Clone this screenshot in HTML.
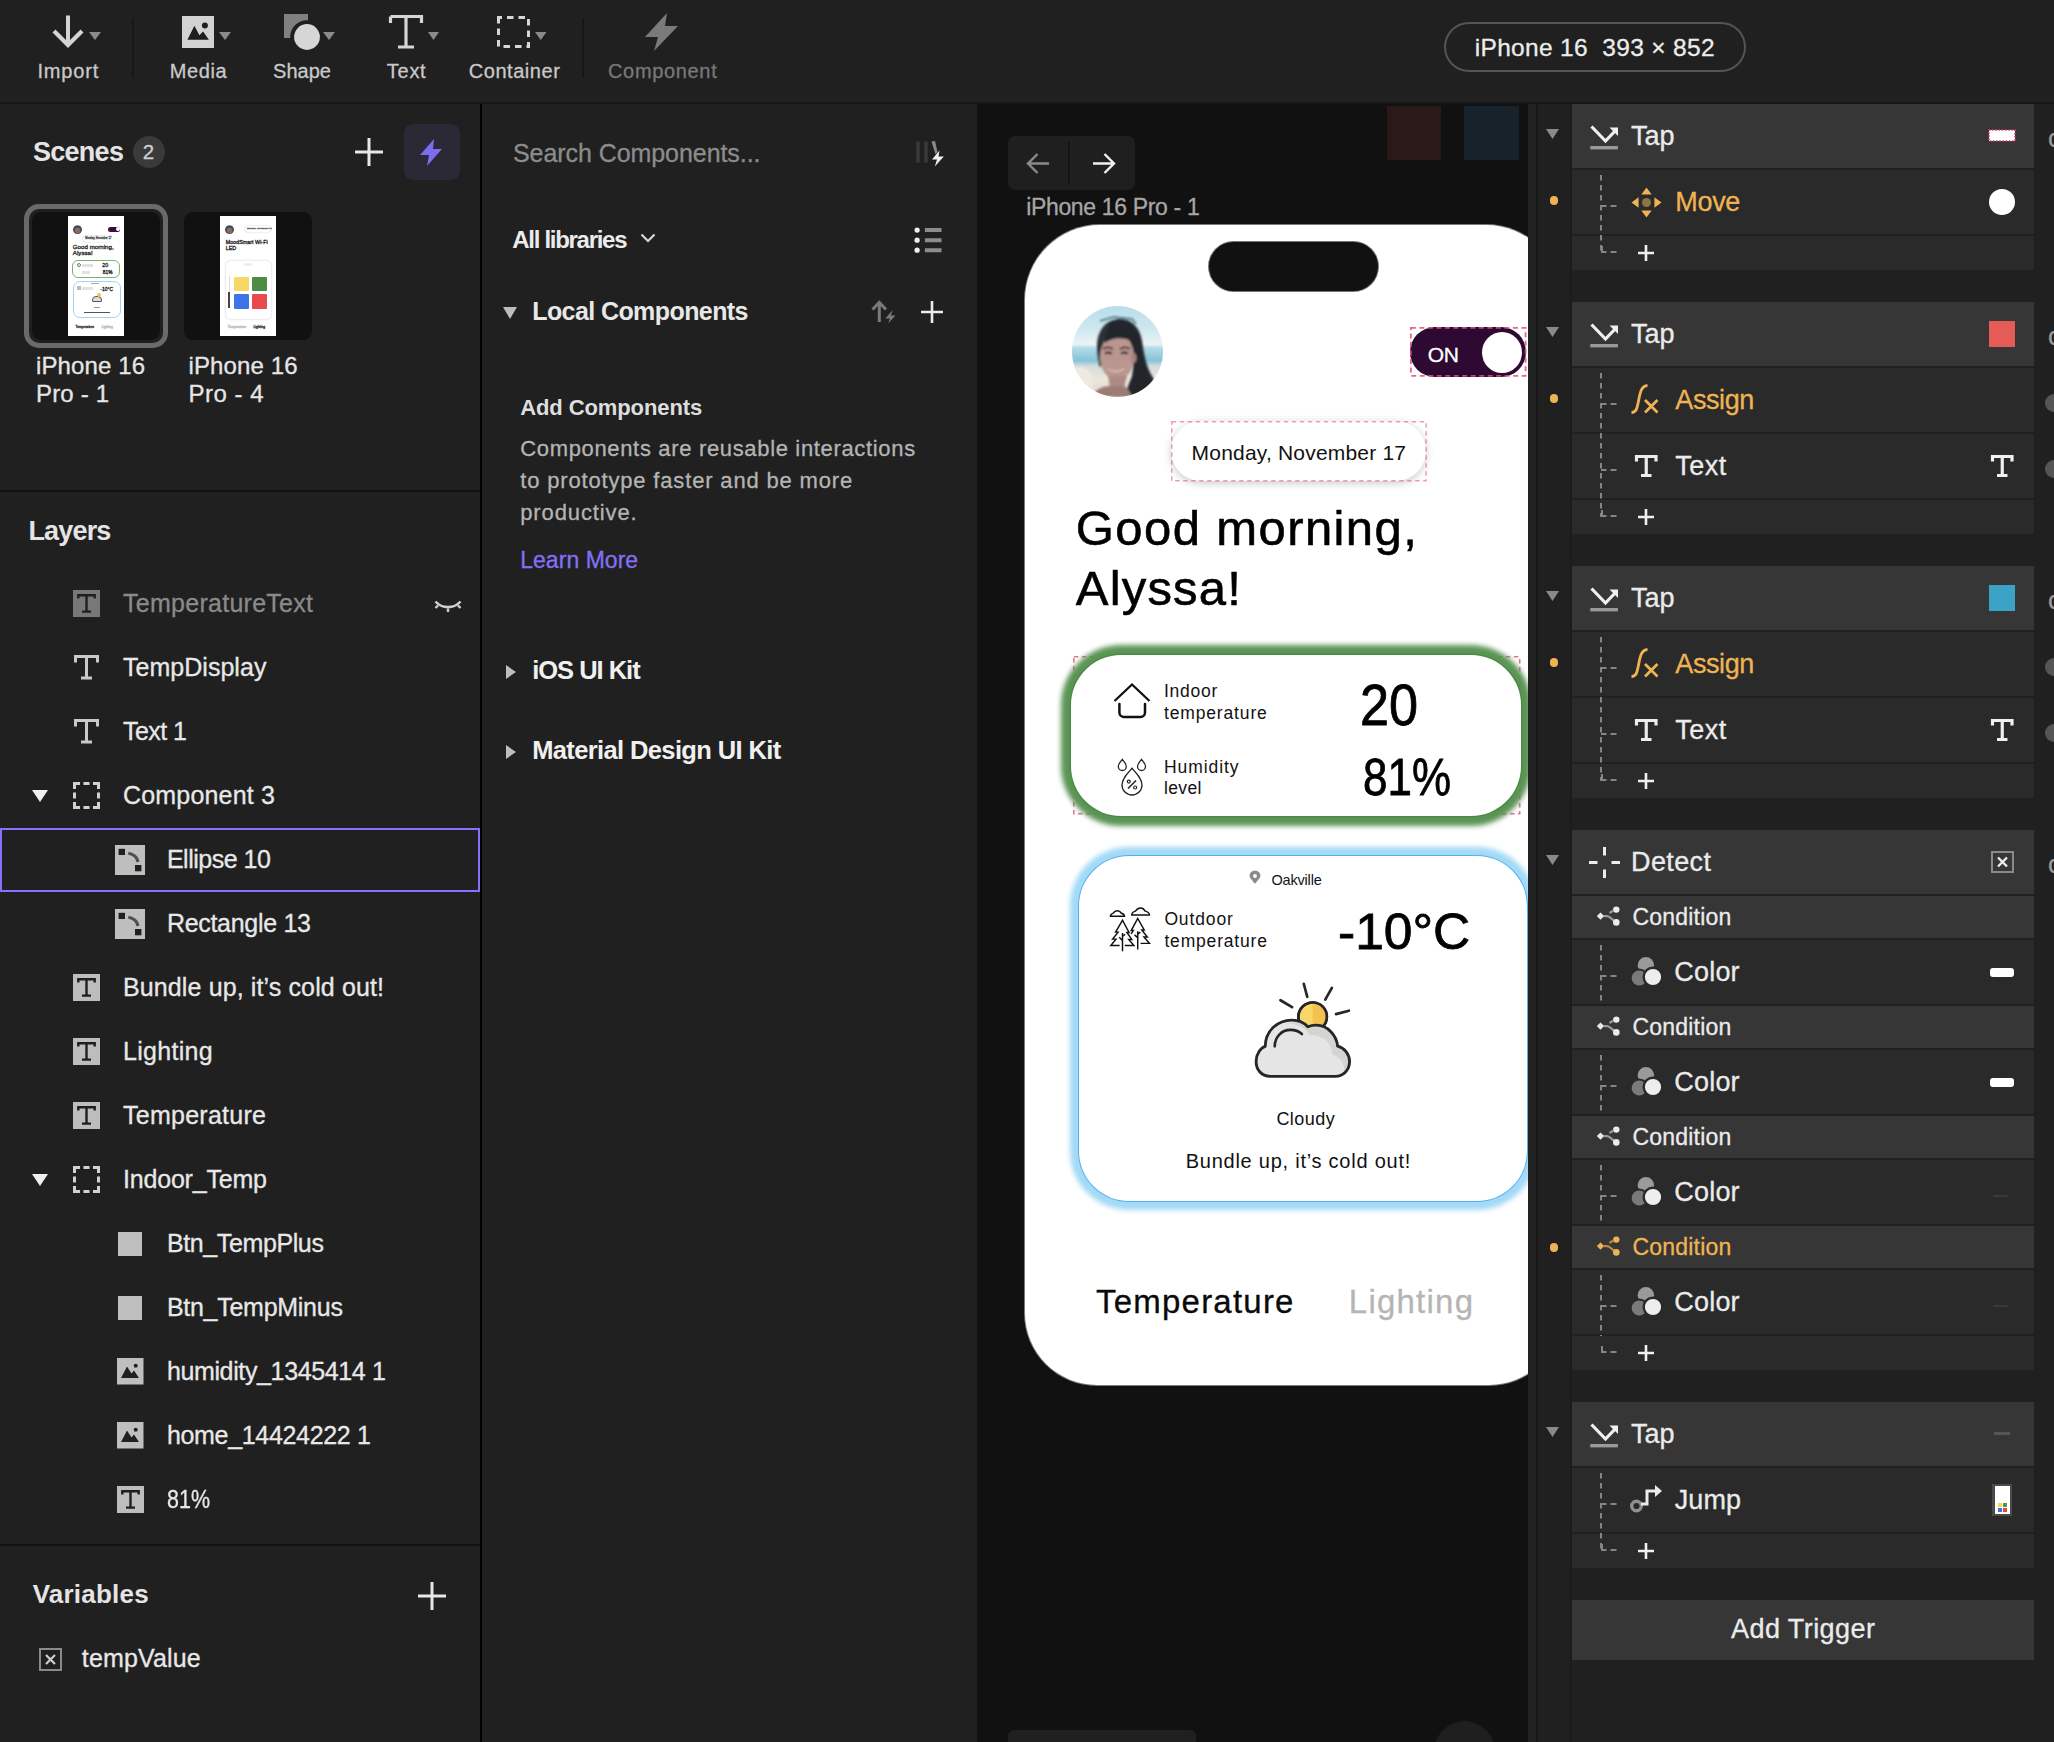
<!DOCTYPE html><html><head><meta charset="utf-8"><style>
html,body{margin:0;padding:0;width:2054px;height:1742px;overflow:hidden;background:#202020;}
body{position:relative;font-family:"Liberation Sans",sans-serif;}
.t{position:absolute;white-space:pre;-webkit-text-stroke-width:0.3px;}
.b{position:absolute;}
svg.b{overflow:visible;}
</style></head><body>
<div class="b" style="left:0px;top:0px;width:2054px;height:103px;background:#202020;"></div>
<div class="b" style="left:0px;top:102px;width:2054px;height:2px;background:#171717;"></div>
<div class="b" style="left:0px;top:104px;width:480px;height:1638px;background:#202020;"></div>
<div class="b" style="left:480px;top:104px;width:2px;height:1638px;background:#000;"></div>
<div class="b" style="left:0px;top:490px;width:480px;height:2px;background:#121212;"></div>
<div class="b" style="left:0px;top:1544px;width:480px;height:2px;background:#121212;"></div>
<div class="b" style="left:482px;top:104px;width:495px;height:1638px;background:#202020;"></div>
<div class="b" style="left:977px;top:104px;width:551px;height:1638px;background:#111111;"></div>
<div class="b" style="left:1528px;top:104px;width:8px;height:1638px;background:#222222;"></div>
<div class="b" style="left:1536px;top:104px;width:2px;height:1638px;background:#171717;"></div>
<div class="b" style="left:1538px;top:104px;width:516px;height:1638px;background:#202020;"></div>
<div class="b" style="left:1570px;top:104px;width:2px;height:1638px;background:#1b1b1b;"></div>
<svg class="b" style="left:52px;top:15px;" width="32" height="34" viewBox="0 0 32 34"><path d="M16 0.5V30" stroke="#d4d4d4" stroke-width="4" fill="none"/><path d="M2 16L16 30L30 16" stroke="#d4d4d4" stroke-width="4.2" fill="none"/></svg>
<svg class="b" style="left:89px;top:31.5px;" width="12" height="8" viewBox="0 0 12 8"><path d="M0 0H12L6.0 8Z" fill="#8a8a8a"/></svg>
<div class="t " style="left:37.40px;top:60.77px;font-size:20px;line-height:20px;color:#c9c9c9;letter-spacing:0.860px;">Import</div>
<div class="b" style="left:132px;top:18px;width:2px;height:60px;background:#171717;"></div>
<svg class="b" style="left:182px;top:16px;" width="32" height="32" viewBox="0 0 32 32"><rect width="32" height="32" fill="#d2d2d2"/><path d="M5.4 23.8L12.4 9.8L17.4 19.3L21.1 15.6L26.9 23.8Z" fill="#1e1e1e"/><circle cx="22.9" cy="9.4" r="3" fill="#1e1e1e"/></svg>
<svg class="b" style="left:219px;top:31.5px;" width="12" height="8" viewBox="0 0 12 8"><path d="M0 0H12L6.0 8Z" fill="#8a8a8a"/></svg>
<div class="t " style="left:169.80px;top:60.77px;font-size:20px;line-height:20px;color:#c9c9c9;letter-spacing:0.575px;">Media</div>
<svg class="b" style="left:284px;top:14px;" width="40" height="38" viewBox="0 0 40 38"><rect x="0" y="0" width="24" height="24" fill="#808080"/><circle cx="23" cy="23" r="16.8" fill="#202020"/><circle cx="23" cy="23" r="12.9" fill="#d6d6d6"/></svg>
<svg class="b" style="left:323px;top:31.5px;" width="12" height="8" viewBox="0 0 12 8"><path d="M0 0H12L6.0 8Z" fill="#8a8a8a"/></svg>
<div class="t " style="left:273.00px;top:60.77px;font-size:20px;line-height:20px;color:#c9c9c9;letter-spacing:0.037px;">Shape</div>
<svg class="b" style="left:389px;top:15px;" width="34" height="34" viewBox="0 0 34 34"><path d="M1.5 1.5H32.5V8M1.5 1.5V8M17 1.5V32M9 32H25" stroke="#d6d6d6" stroke-width="3.2" fill="none"/></svg>
<svg class="b" style="left:427.5px;top:31.8px;" width="11" height="8" viewBox="0 0 11 8"><path d="M0 0H11L5.5 8Z" fill="#8a8a8a"/></svg>
<div class="t " style="left:386.80px;top:60.77px;font-size:20px;line-height:20px;color:#c9c9c9;letter-spacing:0.733px;">Text</div>
<svg class="b" style="left:497px;top:16px;" width="34" height="32" viewBox="0 0 34 32"><rect x="1.5" y="1.5" width="30" height="29" stroke="#d6d6d6" stroke-width="3" fill="none" stroke-dasharray="6.5 5" stroke-dashoffset="3"/></svg>
<svg class="b" style="left:535.4px;top:31.8px;" width="11.5" height="8" viewBox="0 0 11.5 8"><path d="M0 0H11.5L5.75 8Z" fill="#8a8a8a"/></svg>
<div class="t " style="left:468.80px;top:60.77px;font-size:20px;line-height:20px;color:#c9c9c9;letter-spacing:0.537px;">Container</div>
<div class="b" style="left:582px;top:18px;width:2px;height:60px;background:#171717;"></div>
<svg class="b" style="left:645px;top:13px;" width="34" height="38" viewBox="0 0 34 38"><path d="M22 0L0 24H13L9 38L33 13H20Z" fill="#7a7a7a"/></svg>
<div class="t " style="left:608.00px;top:60.77px;font-size:20px;line-height:20px;color:#787878;letter-spacing:0.662px;">Component</div>
<div class="b" style="left:1444px;top:22px;width:302px;height:50px;background:transparent;border:2px solid #545454;border-radius:25px;box-sizing:border-box;"></div>
<div class="t " style="left:1474.70px;top:36.26px;font-size:24.5px;line-height:24.5px;color:#ececec;letter-spacing:0.333px;">iPhone 16  393 × 852</div>
<div class="t " style="left:32.90px;top:138.84px;font-size:27px;line-height:27px;color:#e4e4e4;font-weight:bold;-webkit-text-stroke-width:0;letter-spacing:-0.713px;">Scenes</div>
<div class="b" style="left:133px;top:136px;width:32px;height:32px;background:#3a3a3a;border-radius:16px;"></div>
<div class="t " style="left:142.80px;top:141.55px;font-size:20.5px;line-height:20.5px;color:#d0d0d0;">2</div>
<svg class="b" style="left:355px;top:138px;" width="28" height="28" viewBox="0 0 28 28"><path d="M14 0V28M0 14H28" stroke="#e8e8e8" stroke-width="3"/></svg>
<div class="b" style="left:404px;top:124px;width:56px;height:56px;background:#2a2935;border-radius:9px;"></div>
<svg class="b" style="left:420px;top:139px;" width="22" height="27" viewBox="0 0 22 27"><path d="M14 0L0 16H9L7 27L22 10H13Z" fill="#7b6cf0"/></svg>
<div class="b" style="left:24px;top:204px;width:144px;height:144px;background:transparent;border:5px solid #6a6a6a;border-radius:15px;box-sizing:border-box;"></div>
<div class="b" style="left:32px;top:212px;width:128px;height:128px;background:#111;border-radius:9px;"></div>
<div class="b" style="left:184px;top:212px;width:128px;height:128px;background:#111;border-radius:9px;"></div>
<div class="b" style="left:67.8px;top:215.8px;width:56.0px;height:120.0px;background:#fff;"></div>
<div class="b" style="left:72.8px;top:224.8px;width:9.0px;height:9.0px;background:#6a7a80;border-radius:50%;background:radial-gradient(circle at 50% 60%,#8a6a64 0,#8a6a64 35%,#2a3034 55%,#9fcfe0 80%);"></div>
<div class="b" style="left:108.1px;top:226.5px;width:12.300000000000011px;height:5.0px;background:#3a0b3f;border-radius:3px;"></div>
<div class="b" style="left:115.8px;top:227.0px;width:4.0px;height:4.0px;background:#fff;border-radius:50%;"></div>
<div class="b" style="left:82.8px;top:236.3px;width:27.0px;height:6.099999999999994px;background:#fff;border-radius:3px;box-shadow:0 0 1.5px rgba(0,0,0,0.3);"></div>
<div class="t" style="left:85.30px;top:238.30px;font-size:2.6px;line-height:2.6px;color:#555;">Monday, November 17</div>
<div class="t" style="left:72.80px;top:243.95px;font-size:6.2px;line-height:6.2px;color:#222;">Good morning,</div>
<div class="t" style="left:72.80px;top:250.05px;font-size:6.2px;line-height:6.2px;color:#222;">Alyssa!</div>
<div class="b" style="left:72.1px;top:259.8px;width:48.30000000000001px;height:18.0px;background:#fff;border:1.6px solid #7bb26f;border-radius:6px;box-sizing:border-box;"></div>
<div class="b" style="left:76.8px;top:263.3px;width:4.0px;height:4.0px;background:transparent;border:0.8px solid #777;border-radius:50%;box-sizing:border-box;"></div>
<div class="b" style="left:81.8px;top:263.8px;width:11.0px;height:3.0px;background:#e2e2e2;"></div>
<div class="b" style="left:81.8px;top:270.8px;width:8.0px;height:3.0px;background:#e2e2e2;"></div>
<div class="t" style="left:102.30px;top:263.20px;font-size:5.2px;line-height:5.2px;color:#222;">20</div>
<div class="t" style="left:102.80px;top:270.74px;font-size:4.8px;line-height:4.8px;color:#222;">81%</div>
<div class="b" style="left:72.5px;top:280.5px;width:48.5px;height:37.0px;background:#fff;border:1.6px solid #9fd4f4;border-radius:7px;box-sizing:border-box;"></div>
<div class="b" style="left:90.8px;top:282.8px;width:8.0px;height:1.5px;background:#aaa;"></div>
<div class="b" style="left:76.8px;top:286.3px;width:4.0px;height:3.5px;background:#bbb;"></div>
<div class="b" style="left:81.8px;top:286.8px;width:11.0px;height:3.0px;background:#e2e2e2;"></div>
<div class="t" style="left:100.30px;top:286.57px;font-size:5px;line-height:5px;color:#222;">-10°C</div>
<div class="b" style="left:91.8px;top:295.8px;width:10.0px;height:6.0px;background:#ddd;border:0.8px solid #555;border-radius:4px 4px 1px 1px;box-sizing:border-box;"></div>
<div class="b" style="left:96.8px;top:293.3px;width:4.0px;height:4.0px;background:#f2c24f;border-radius:50%;"></div>
<div class="b" style="left:93.8px;top:306.8px;width:6.0px;height:1.0px;background:#999;"></div>
<div class="b" style="left:83.8px;top:311.8px;width:26.0px;height:1.5px;background:#555;"></div>
<div class="t" style="left:75.60px;top:325.71px;font-size:3.3px;line-height:3.3px;color:#333;">Temperature</div>
<div class="t" style="left:101.40px;top:325.71px;font-size:3.3px;line-height:3.3px;color:#bbb;">Lighting</div>
<div class="b" style="left:219.9px;top:215.8px;width:55.99999999999997px;height:120.0px;background:#fff;"></div>
<div class="b" style="left:224.9px;top:224.8px;width:9.0px;height:9.0px;background:#6a7a80;border-radius:50%;background:radial-gradient(circle at 50% 60%,#8a6a64 0,#8a6a64 35%,#2a3034 55%,#9fcfe0 80%);"></div>
<div class="b" style="left:244.8px;top:226.3px;width:26.30000000000001px;height:5.5px;background:#fff;border-radius:3px;box-shadow:0 0 1.5px rgba(0,0,0,0.3);"></div>
<div class="t" style="left:246.90px;top:227.98px;font-size:2.5px;line-height:2.5px;color:#555;">Monday, November 17</div>
<div class="t" style="left:225.70px;top:240.13px;font-size:5.4px;line-height:5.4px;color:#222;">MoodSmart Wi-Fi</div>
<div class="t" style="left:225.70px;top:246.23px;font-size:5.4px;line-height:5.4px;color:#222;">LED</div>
<div class="b" style="left:224.6px;top:260.40000000000003px;width:47.00000000000003px;height:59.39999999999998px;background:#fff;border:0.8px solid #eee;border-radius:6px;box-sizing:border-box;box-shadow:0 0 2px rgba(0,0,0,0.08);"></div>
<div class="b" style="left:244.4px;top:262.8px;width:7.5px;height:3.0px;background:#eee;border-radius:2px;"></div>
<div class="b" style="left:228.5px;top:275.8px;width:1.200000000000017px;height:16.0px;background:#ddd;"></div>
<div class="b" style="left:228.20000000000002px;top:291.8px;width:1.799999999999983px;height:16.0px;background:#444;"></div>
<div class="b" style="left:234.1px;top:276.6px;width:15.100000000000023px;height:14.899999999999977px;background:#f6d867;border-radius:1px;"></div>
<div class="b" style="left:252.0px;top:276.6px;width:14.899999999999977px;height:14.899999999999977px;background:#4e8c45;border-radius:1px;"></div>
<div class="b" style="left:234.1px;top:294.0px;width:15.100000000000023px;height:15.100000000000023px;background:#3f74e8;border-radius:1px;"></div>
<div class="b" style="left:252.0px;top:294.0px;width:14.899999999999977px;height:15.100000000000023px;background:#e84a4f;border-radius:1px;"></div>
<div class="t" style="left:227.70px;top:325.71px;font-size:3.3px;line-height:3.3px;color:#bbb;">Temperature</div>
<div class="t" style="left:253.50px;top:325.71px;font-size:3.3px;line-height:3.3px;color:#333;">Lighting</div>
<div class="t " style="left:36.00px;top:354.08px;font-size:24px;line-height:24px;color:#e6e6e6;letter-spacing:0.110px;">iPhone 16</div>
<div class="t " style="left:36.00px;top:382.38px;font-size:24px;line-height:24px;color:#e6e6e6;letter-spacing:0.167px;">Pro - 1</div>
<div class="t " style="left:188.50px;top:354.08px;font-size:24px;line-height:24px;color:#e6e6e6;letter-spacing:0.110px;">iPhone 16</div>
<div class="t " style="left:188.50px;top:382.38px;font-size:24px;line-height:24px;color:#e6e6e6;letter-spacing:0.500px;">Pro - 4</div>
<div class="t " style="left:28.40px;top:518.34px;font-size:27px;line-height:27px;color:#e4e4e4;font-weight:bold;-webkit-text-stroke-width:0;letter-spacing:-0.815px;">Layers</div>
<svg class="b" style="left:72.7px;top:590.2px;" width="27" height="27" viewBox="0 0 27 27"><rect width="27" height="27" fill="#787878"/><path d="M5.3 8.5V5.2H21.7V8.5M13.5 5.2V21.6M9 21.6H18" stroke="#1f1f1f" stroke-width="2.4" fill="none"/></svg>
<div class="t " style="left:123.00px;top:591.04px;font-size:25px;line-height:25px;color:#8a8a8a;letter-spacing:0.272px;">TemperatureText</div>
<svg class="b" style="left:73.8px;top:655.2px;" width="25" height="25" viewBox="0 0 25 25"><path d="M1.5 7.5V1.5H23.5V7.5M12.5 1.5V23M7 23H18" stroke="#c9c9c9" stroke-width="3" fill="none"/></svg>
<div class="t " style="left:123.00px;top:655.04px;font-size:25px;line-height:25px;color:#e8e8e8;letter-spacing:0.028px;">TempDisplay</div>
<svg class="b" style="left:73.8px;top:719.2px;" width="25" height="25" viewBox="0 0 25 25"><path d="M1.5 7.5V1.5H23.5V7.5M12.5 1.5V23M7 23H18" stroke="#c9c9c9" stroke-width="3" fill="none"/></svg>
<div class="t " style="left:123.00px;top:719.04px;font-size:25px;line-height:25px;color:#e8e8e8;letter-spacing:-0.537px;">Text 1</div>
<svg class="b" style="left:72.7px;top:782.2px;" width="27" height="27" viewBox="0 0 27 27"><path d="M1.5 7V1.5H7M20 1.5H25.5V7M25.5 20V25.5H20M7 25.5H1.5V20M10.5 1.5H16.5M10.5 25.5H16.5M1.5 10.5V16.5M25.5 10.5V16.5" stroke="#d2d2d2" stroke-width="3" fill="none"/></svg>
<svg class="b" style="left:31.7px;top:789.5px;" width="16" height="12" viewBox="0 0 16 12"><path d="M0 0H16L8.0 12Z" fill="#f0f0f0"/></svg>
<div class="t " style="left:123.00px;top:783.04px;font-size:25px;line-height:25px;color:#e8e8e8;letter-spacing:0.188px;">Component 3</div>
<div class="b" style="left:0px;top:828px;width:480px;height:64px;background:transparent;border:2px solid #8572ff;box-sizing:border-box;"></div>
<svg class="b" style="left:115px;top:844.5px;" width="30" height="30" viewBox="0 0 30 30"><rect width="30" height="30" fill="#bebebe"/><rect x="3.6" y="3.8" width="6.4" height="6.2" fill="#202020"/><rect x="20" y="20" width="6.4" height="6.3" fill="#202020"/><path d="M13.3 8.2C17.5 8.5 22.5 12 23 17" stroke="#4f4f4f" stroke-width="3" fill="none"/></svg>
<div class="t " style="left:166.90px;top:847.04px;font-size:25px;line-height:25px;color:#e8e8e8;letter-spacing:-0.486px;">Ellipse 10</div>
<svg class="b" style="left:115px;top:908.5px;" width="30" height="30" viewBox="0 0 30 30"><rect width="30" height="30" fill="#bebebe"/><rect x="3.6" y="3.8" width="6.4" height="6.2" fill="#202020"/><rect x="20" y="20" width="6.4" height="6.3" fill="#202020"/><path d="M13.3 8.2C17.5 8.5 22.5 12 23 17" stroke="#4f4f4f" stroke-width="3" fill="none"/></svg>
<div class="t " style="left:166.90px;top:911.04px;font-size:25px;line-height:25px;color:#e8e8e8;letter-spacing:-0.301px;">Rectangle 13</div>
<svg class="b" style="left:72.7px;top:974.2px;" width="27" height="27" viewBox="0 0 27 27"><rect width="27" height="27" fill="#bdbdbd"/><path d="M5.3 8.5V5.2H21.7V8.5M13.5 5.2V21.6M9 21.6H18" stroke="#1f1f1f" stroke-width="2.4" fill="none"/></svg>
<div class="t " style="left:123.00px;top:975.04px;font-size:25px;line-height:25px;color:#e8e8e8;letter-spacing:0.122px;">Bundle up, it’s cold out!</div>
<svg class="b" style="left:72.7px;top:1038.2px;" width="27" height="27" viewBox="0 0 27 27"><rect width="27" height="27" fill="#bdbdbd"/><path d="M5.3 8.5V5.2H21.7V8.5M13.5 5.2V21.6M9 21.6H18" stroke="#1f1f1f" stroke-width="2.4" fill="none"/></svg>
<div class="t " style="left:123.00px;top:1039.04px;font-size:25px;line-height:25px;color:#e8e8e8;letter-spacing:0.291px;">Lighting</div>
<svg class="b" style="left:72.7px;top:1102.2px;" width="27" height="27" viewBox="0 0 27 27"><rect width="27" height="27" fill="#bdbdbd"/><path d="M5.3 8.5V5.2H21.7V8.5M13.5 5.2V21.6M9 21.6H18" stroke="#1f1f1f" stroke-width="2.4" fill="none"/></svg>
<div class="t " style="left:123.00px;top:1103.04px;font-size:25px;line-height:25px;color:#e8e8e8;letter-spacing:0.263px;">Temperature</div>
<svg class="b" style="left:72.7px;top:1166.2px;" width="27" height="27" viewBox="0 0 27 27"><path d="M1.5 7V1.5H7M20 1.5H25.5V7M25.5 20V25.5H20M7 25.5H1.5V20M10.5 1.5H16.5M10.5 25.5H16.5M1.5 10.5V16.5M25.5 10.5V16.5" stroke="#d2d2d2" stroke-width="3" fill="none"/></svg>
<svg class="b" style="left:31.7px;top:1173.5px;" width="16" height="12" viewBox="0 0 16 12"><path d="M0 0H16L8.0 12Z" fill="#f0f0f0"/></svg>
<div class="t " style="left:123.00px;top:1167.04px;font-size:25px;line-height:25px;color:#e8e8e8;letter-spacing:-0.194px;">Indoor_Temp</div>
<div class="b" style="left:118px;top:1231.5px;width:24px;height:24.0px;background:#bfbfbf;"></div>
<div class="t " style="left:166.90px;top:1231.04px;font-size:25px;line-height:25px;color:#e8e8e8;letter-spacing:-0.381px;">Btn_TempPlus</div>
<div class="b" style="left:118px;top:1295.5px;width:24px;height:24.0px;background:#bfbfbf;"></div>
<div class="t " style="left:166.90px;top:1295.04px;font-size:25px;line-height:25px;color:#e8e8e8;letter-spacing:-0.271px;">Btn_TempMinus</div>
<svg class="b" style="left:116.9px;top:1358.2px;" width="26.5" height="26.5" viewBox="0 0 26.5 26.5"><rect width="26.5" height="26.5" fill="#bfbfbf"/><path d="M4 20L10 8.5L14.5 15.5L17 12.5L22 20Z" fill="#202020"/><circle cx="18.7" cy="7.8" r="2" fill="#202020"/></svg>
<div class="t " style="left:166.90px;top:1359.04px;font-size:25px;line-height:25px;color:#e8e8e8;letter-spacing:-0.364px;">humidity_1345414 1</div>
<svg class="b" style="left:116.9px;top:1422.2px;" width="26.5" height="26.5" viewBox="0 0 26.5 26.5"><rect width="26.5" height="26.5" fill="#bfbfbf"/><path d="M4 20L10 8.5L14.5 15.5L17 12.5L22 20Z" fill="#202020"/><circle cx="18.7" cy="7.8" r="2" fill="#202020"/></svg>
<div class="t " style="left:166.90px;top:1423.04px;font-size:25px;line-height:25px;color:#e8e8e8;letter-spacing:-0.321px;">home_14424222 1</div>
<svg class="b" style="left:116.8px;top:1486.2px;" width="27" height="27" viewBox="0 0 27 27"><rect width="27" height="27" fill="#bdbdbd"/><path d="M5.3 8.5V5.2H21.7V8.5M13.5 5.2V21.6M9 21.6H18" stroke="#1f1f1f" stroke-width="2.4" fill="none"/></svg>
<div class="t " style="left:166.90px;top:1487.04px;font-size:25px;line-height:25px;color:#e8e8e8;transform:scaleX(0.8589);transform-origin:0.00px 0;">81%</div>
<svg class="b" style="left:434px;top:599px;" width="28" height="16" viewBox="0 0 28 16"><path d="M1.5 2.5C8 10 20 10 26.5 2.5" stroke="#cfcfcf" stroke-width="2.6" fill="none"/><path d="M4 6.5L1.5 9M24 6.5L26.5 9M14 9.5V13" stroke="#cfcfcf" stroke-width="2.4"/></svg>
<div class="t " style="left:32.70px;top:1580.69px;font-size:26px;line-height:26px;color:#e4e4e4;font-weight:bold;-webkit-text-stroke-width:0;letter-spacing:0.224px;">Variables</div>
<svg class="b" style="left:418px;top:1582px;" width="28" height="28" viewBox="0 0 28 28"><path d="M14 0V28M0 14H28" stroke="#e8e8e8" stroke-width="3"/></svg>
<svg class="b" style="left:38.6px;top:1647.7px;" width="23" height="23" viewBox="0 0 23 23"><rect x="1" y="1" width="21" height="21" stroke="#8a8a8a" stroke-width="2" fill="none"/><path d="M7 7L16 16M16 7L7 16" stroke="#cfcfcf" stroke-width="2.2"/></svg>
<div class="t " style="left:81.80px;top:1646.34px;font-size:25px;line-height:25px;color:#e8e8e8;letter-spacing:0.164px;">tempValue</div>
<div class="t " style="left:513.00px;top:140.54px;font-size:25px;line-height:25px;color:#8c8c8c;letter-spacing:-0.066px;">Search Components...</div>
<svg class="b" style="left:914px;top:140px;" width="32" height="28" viewBox="0 0 32 28"><rect x="2.3" y="1.5" width="3.4" height="21.2" fill="#3a3a3a"/><rect x="10.3" y="1.5" width="3.4" height="21.2" fill="#3a3a3a"/><path d="M17.5 1.5L21 1L23.5 12L21.5 14.5Z" fill="#8a8a8a"/><path d="M25.5 10.5L18 19.5H23L20.8 26.5L29.8 16.5H24.5Z" fill="#f2f2f2"/></svg>
<div class="t " style="left:512.30px;top:227.88px;font-size:24px;line-height:24px;color:#ececec;font-weight:bold;-webkit-text-stroke-width:0;letter-spacing:-1.295px;">All libraries</div>
<svg class="b" style="left:640px;top:233px;" width="16" height="10" viewBox="0 0 16 10"><path d="M1.5 1.5L8 8L14.5 1.5" stroke="#d8d8d8" stroke-width="2.2" fill="none"/></svg>
<svg class="b" style="left:912px;top:226px;" width="32" height="28" viewBox="0 0 32 28"><circle cx="5.1" cy="4.1" r="2.6" fill="#f0f0f0"/><circle cx="5.1" cy="14.2" r="2.6" fill="#f0f0f0"/><circle cx="5.1" cy="24.2" r="2.6" fill="#f0f0f0"/><path d="M12.9 4.1H29.5M12.9 14.2H29.5M12.9 24.2H29.5" stroke="#8c8c8c" stroke-width="4"/></svg>
<svg class="b" style="left:503px;top:307px;" width="14" height="12" viewBox="0 0 14 12"><path d="M0 0H14L7 12Z" fill="#bdbdbd"/></svg>
<div class="t " style="left:532.20px;top:298.84px;font-size:25px;line-height:25px;color:#e8e8e8;font-weight:bold;-webkit-text-stroke-width:0;letter-spacing:-0.580px;">Local Components</div>
<svg class="b" style="left:870px;top:300px;" width="28" height="25" viewBox="0 0 28 25"><path d="M9.3 22V2.5M2.5 9.5L9.3 2.5L16 9.5" stroke="#7a7a7a" stroke-width="3" fill="none"/><path d="M22.5 10L15.5 18.5H20L18 23.5L25.5 15.5H21Z" fill="#7a7a7a"/></svg>
<svg class="b" style="left:921px;top:301px;" width="22" height="22" viewBox="0 0 22 22"><path d="M11 0V22M0 11H22" stroke="#ececec" stroke-width="2.6"/></svg>
<div class="t " style="left:520.20px;top:397.28px;font-size:22px;line-height:22px;color:#dedede;font-weight:bold;-webkit-text-stroke-width:0;letter-spacing:-0.101px;">Add Components</div>
<div class="t " style="left:520.20px;top:437.78px;font-size:22px;line-height:22px;color:#b4b4b4;letter-spacing:0.663px;">Components are reusable interactions</div>
<div class="t " style="left:520.20px;top:469.88px;font-size:22px;line-height:22px;color:#b4b4b4;letter-spacing:0.835px;">to prototype faster and be more</div>
<div class="t " style="left:520.20px;top:502.08px;font-size:22px;line-height:22px;color:#b4b4b4;letter-spacing:0.886px;">productive.</div>
<div class="t " style="left:520.20px;top:548.63px;font-size:23px;line-height:23px;color:#8270f5;letter-spacing:0.039px;">Learn More</div>
<svg class="b" style="left:506px;top:664.5px;" width="10" height="14" viewBox="0 0 10 14"><path d="M0 0V14L10 7Z" fill="#bdbdbd"/></svg>
<div class="t " style="left:532.20px;top:658.41px;font-size:25.5px;line-height:25.5px;color:#f0f0f0;font-weight:bold;-webkit-text-stroke-width:0;letter-spacing:-1.013px;">iOS UI Kit</div>
<svg class="b" style="left:506px;top:744.5px;" width="10" height="14" viewBox="0 0 10 14"><path d="M0 0V14L10 7Z" fill="#bdbdbd"/></svg>
<div class="t " style="left:532.20px;top:737.61px;font-size:25.5px;line-height:25.5px;color:#f0f0f0;font-weight:bold;-webkit-text-stroke-width:0;letter-spacing:-0.626px;">Material Design UI Kit</div>
<div class="b" style="left:977px;top:104px;width:551px;height:1638px;overflow:hidden;background:#111111;">
<div class="b" style="left:410px;top:2px;width:54px;height:54px;background:#2b1919;"></div>
<div class="b" style="left:487px;top:2px;width:54.5px;height:54px;background:#17222a;"></div>
<div class="b" style="left:31px;top:32px;width:127px;height:54px;background:#1f1f1f;border-radius:7px;"></div>
<div class="b" style="left:91px;top:38px;width:2px;height:42px;background:#141414;"></div>
<svg class="b" style="left:49px;top:49px;" width="24" height="21" viewBox="0 0 24 21"><path d="M23 10.5H2M11.5 1L2 10.5L11.5 20" stroke="#8a8a8a" stroke-width="2.4" fill="none"/></svg>
<svg class="b" style="left:115px;top:49px;" width="24" height="21" viewBox="0 0 24 21"><path d="M1 10.5H22M12.5 1L22 10.5L12.5 20" stroke="#f0f0f0" stroke-width="2.4" fill="none"/></svg>
<div class="t " style="left:49.20px;top:91.53px;font-size:23px;line-height:23px;color:#a6a6a6;letter-spacing:-0.344px;">iPhone 16 Pro - 1</div>
<div class="b" style="left:48px;top:121px;width:536px;height:1160px;background:#ffffff;border-radius:75px 75px 72px 72px;box-shadow:0 0 0 1px #7a7a7a;"></div>
<div class="b" style="left:232px;top:137.5px;width:168.5px;height:49.0px;background:#111111;border-radius:25px;box-shadow:0 0 0 1px #777;"></div>
<svg class="b" style="left:95px;top:202px;" width="91" height="91" viewBox="0 0 91 91"><defs><clipPath id="av"><circle cx="45.5" cy="45.5" r="45.5"/></clipPath>
<linearGradient id="sky" x1="0" y1="0" x2="0" y2="1"><stop offset="0" stop-color="#b9ddec"/><stop offset="0.25" stop-color="#cfe7f0"/><stop offset="0.42" stop-color="#e9f4f7"/><stop offset="0.46" stop-color="#b5dbe8"/><stop offset="0.6" stop-color="#86c3d8"/><stop offset="0.66" stop-color="#d3dcdc"/><stop offset="0.8" stop-color="#ece6dd"/><stop offset="1" stop-color="#e2d9cf"/></linearGradient>
<filter id="bl" x="-20%" y="-20%" width="140%" height="140%"><feGaussianBlur stdDeviation="1.1"/></filter></defs>
<g clip-path="url(#av)"><rect width="91" height="91" fill="url(#sky)"/>
<g filter="url(#bl)">
<path d="M3 62C8 60 14 62 18 66L22 91H0V66Z" fill="#efe9e2"/>
<path d="M27 36C26 22 36 13 48 13C60 13 68 22 70 35C72 48 74 60 80 70C84 76 84 84 80 91H52L60 70C62 60 62 45 58 36C52 28 40 27 33 36L30 58L27 60Z" fill="#22282c"/>
<path d="M25 40C25 28 30 20 38 17L34 30L31 48L29 62C26 56 25 48 25 40Z" fill="#2b3135"/>
<ellipse cx="45" cy="51" rx="17" ry="23" fill="#b9968f"/><path d="M36 70L38 82L52 82L55 70Z" fill="#ad8b84"/>
<ellipse cx="61.5" cy="52" rx="3" ry="5" fill="#a7847d"/>
<path d="M20 91C22 84 30 80 38 80L52 80C56 82 58 86 60 91Z" fill="#9c7d76"/>
<path d="M33 31C38 26 50 25 58 31L59 35C52 31 40 31 33 37Z" fill="#22282c"/>
<path d="M31 43C34 41 38 41 41 43M48 43C51 41 55 41 58 43" stroke="#3a2622" stroke-width="1.6" fill="none"/>
<path d="M33 47.5C35 46.5 38 46.5 40 47.5M49 47.5C51 46.5 54 46.5 56 47.5" stroke="#2a1e1c" stroke-width="2" fill="none"/>
<path d="M34 62C39 66 48 66 53 62C50 67 38 67 34 62Z" fill="#f4eeee"/>
<path d="M36 65C40 69 48 69 52 65" stroke="#c48a8a" stroke-width="1.5" fill="none"/>
<path d="M28 15L42 11L60 13L64 18" stroke="#3b6a72" stroke-width="1.4" fill="none"/>
</g></g></svg>
<div class="b" style="left:433px;top:223px;width:116px;height:50px;background:#2e0a33;border-radius:25px;"></div>
<div class="b" style="left:504.8px;top:227.7px;width:40.400000000000034px;height:41.30000000000001px;background:#ffffff;border-radius:50%;"></div>
<div class="t " style="left:450.80px;top:239.72px;font-size:21px;line-height:21px;color:#ffffff;letter-spacing:-0.500px;">ON</div>
<svg class="b" style="left:432.5px;top:223px;" width="116.5" height="49.69999999999999" viewBox="0 0 116.5 49.69999999999999"><rect x="0.9" y="0.9" width="114.7" height="47.89999999999999" fill="none" stroke="rgba(222,80,115,0.85)" stroke-width="1.8" stroke-dasharray="5 3.5"/></svg>
<div class="b" style="left:193.6px;top:316.7px;width:255.9px;height:60.60000000000002px;background:#ffffff;border-radius:31px;box-shadow:0 2px 9px rgba(0,0,0,0.22);"></div>
<svg class="b" style="left:193.6px;top:316.7px;" width="255.9000000000001" height="60.60000000000002" viewBox="0 0 255.9000000000001 60.60000000000002"><rect x="0.75" y="0.75" width="254.4000000000001" height="59.10000000000002" fill="none" stroke="rgba(222,80,115,0.55)" stroke-width="1.5" stroke-dasharray="4.5 3.5"/></svg>
<div class="t " style="left:214.60px;top:337.52px;font-size:21px;line-height:21px;color:#111111;letter-spacing:0.195px;-webkit-text-stroke-width:0;">Monday, November 17</div>
<div class="t " style="left:98.80px;top:400.42px;font-size:49px;line-height:49px;color:#000;letter-spacing:1.405px;-webkit-text-stroke-width:0.6px;">Good morning,</div>
<div class="t " style="left:98.80px;top:459.82px;font-size:49px;line-height:49px;color:#000;letter-spacing:1.183px;-webkit-text-stroke-width:0.6px;">Alyssa!</div>
<svg class="b" style="left:95.5px;top:552px;" width="447.5" height="158.5" viewBox="0 0 447.5 158.5"><rect x="0.8" y="0.8" width="445.9" height="156.9" fill="none" stroke="rgba(222,80,115,0.8)" stroke-width="1.6" stroke-dasharray="4.5 3.5"/></svg>
<div class="b" style="left:94px;top:550.5px;width:449.6px;height:161.0px;background:#ffffff;border-radius:50px;box-shadow:0 0 0 1.5px #4e8a47, 0 0 5px 10px rgba(86,146,79,0.97);"></div>
<svg class="b" style="left:136px;top:578px;" width="38" height="37" viewBox="0 0 38 37"><path d="M1.5 19L19 2.5L36.5 19" stroke="#111" stroke-width="2.3" fill="none" stroke-linejoin="miter"/><path d="M6.4 22V30.5C6.4 33 8.5 35 11 35H27.5C30 35 32 33 32 30.5V22" stroke="#111" stroke-width="2.5" fill="none" stroke-linecap="round"/></svg>
<div class="t " style="left:187.00px;top:579.19px;font-size:17.5px;line-height:17.5px;color:#111;letter-spacing:0.738px;-webkit-text-stroke-width:0;">Indoor</div>
<div class="t " style="left:187.00px;top:600.99px;font-size:17.5px;line-height:17.5px;color:#111;letter-spacing:0.843px;-webkit-text-stroke-width:0;">temperature</div>
<div class="t " style="left:382.50px;top:572.95px;font-size:57px;line-height:57px;color:#000;transform:scaleX(0.9162);transform-origin:0.00px 0;-webkit-text-stroke-width:0.8px;">20</div>
<svg class="b" style="left:140px;top:654px;" width="31" height="37" viewBox="0 0 31 37"><path d="M5.3 1.3C3 4 1.3 6 1.3 8.5A4 4 0 0 0 9.3 8.5C9.3 6 7.6 4 5.3 1.3Z M24.5 1.3C22.2 4 20.5 6 20.5 8.5A4 4 0 0 0 28.5 8.5C28.5 6 26.8 4 24.5 1.3Z M15 10.3C10 16 5 21 5 27A10 10 0 0 0 25 27C25 21 20 16 15 10.3Z" stroke="#222" stroke-width="1.3" fill="none"/><path d="M11 30.5L19 22.5" stroke="#222" stroke-width="1.6"/><circle cx="11.8" cy="23.6" r="1.5" stroke="#222" stroke-width="1.2" fill="none"/><circle cx="18.2" cy="29.5" r="1.5" stroke="#222" stroke-width="1.2" fill="none"/></svg>
<div class="t " style="left:187.00px;top:654.99px;font-size:17.5px;line-height:17.5px;color:#111;letter-spacing:0.918px;-webkit-text-stroke-width:0;">Humidity</div>
<div class="t " style="left:187.00px;top:676.49px;font-size:17.5px;line-height:17.5px;color:#111;letter-spacing:0.348px;-webkit-text-stroke-width:0;">level</div>
<div class="t " style="left:386.40px;top:647.28px;font-size:52px;line-height:52px;color:#000;transform:scaleX(0.8451);transform-origin:0.00px 0;-webkit-text-stroke-width:0.8px;">81%</div>
<div class="b" style="left:102px;top:751.5px;width:447.5px;height:345.5px;background:#ffffff;border-radius:50px;box-shadow:0 0 0 1px #55b0ef, 0 0 5px 8.5px #a3daf6;"></div>
<svg class="b" style="left:271.5px;top:767px;" width="12" height="13" viewBox="0 0 12 13"><path d="M6 12.8C3 9 0.5 6.5 0.5 5A5.5 5.5 0 0 1 11.5 5C11.5 6.5 9 9 6 12.8Z" fill="#8a8a8a"/><circle cx="6" cy="5" r="1.9" fill="#fff"/></svg>
<div class="t " style="left:294.40px;top:769.13px;font-size:14.5px;line-height:14.5px;color:#111;letter-spacing:-0.169px;-webkit-text-stroke-width:0;">Oakville</div>
<svg class="b" style="left:128px;top:798px;" width="50" height="53" viewBox="0 0 1643 1742"><g stroke="#111" stroke-width="48" fill="none" stroke-linejoin="miter">
<path d="M180 470H640C640 420 600 385 540 370C500 310 460 285 410 285C350 285 300 315 270 365C210 385 180 420 180 470Z"/>
<path d="M880 430H1460C1460 370 1420 320 1320 300C1280 230 1230 200 1170 200C1100 200 1040 240 1000 300C920 320 880 370 880 430Z"/>
<path d="M480 1430H190L360 1220H250L430 990H350L575 600L790 1000H720L880 1230H780L950 1430H650"/>
<path d="M575 1020V1620M575 1260L465 1160M575 1130L660 1060"/>
<path d="M860 1050L930 940H860L1075 540L1290 920H1210L1390 1150H1280L1460 1360H1170"/>
<path d="M1075 960V1560M1075 1170L970 1080M1075 1060L1160 990"/>
</g></svg>
<div class="t " style="left:187.40px;top:807.19px;font-size:17.5px;line-height:17.5px;color:#111;letter-spacing:0.864px;-webkit-text-stroke-width:0;">Outdoor</div>
<div class="t " style="left:187.40px;top:829.09px;font-size:17.5px;line-height:17.5px;color:#111;letter-spacing:0.823px;-webkit-text-stroke-width:0;">temperature</div>
<div class="t " style="left:361.00px;top:802.77px;font-size:50px;line-height:50px;color:#000;transform:scaleX(1.0298);transform-origin:0.00px 0;-webkit-text-stroke-width:0.8px;">-10°C</div>
<svg class="b" style="left:263px;top:871px;" width="120" height="110" viewBox="0 0 1900 1742"><g stroke="#262626" stroke-width="42" stroke-linecap="round" fill="none">
<path d="M640 400L825 510M1010 140L1065 345M1455 205L1350 390M1520 620L1725 565"/></g>
<circle cx="1150" cy="660" r="225" fill="#f7d66a" stroke="#262626" stroke-width="42"/>
<path d="M1150 437A223 223 0 0 1 1150 883Z" fill="#f3c24f"/>
<circle cx="1150" cy="660" r="225" fill="none" stroke="#262626" stroke-width="42"/>
<defs><clipPath id="cc"><path d="M480 1605C330 1605 255 1490 255 1370C255 1250 330 1150 400 1130C400 880 600 715 820 715C920 715 1010 750 1075 820C1120 800 1160 795 1210 795C1390 795 1530 960 1545 1125C1650 1150 1735 1250 1735 1370C1735 1500 1640 1605 1510 1605Z"/></clipPath></defs>
<path d="M480 1605C330 1605 255 1490 255 1370C255 1250 330 1150 400 1130C400 880 600 715 820 715C920 715 1010 750 1075 820C1120 800 1160 795 1210 795C1390 795 1530 960 1545 1125C1650 1150 1735 1250 1735 1370C1735 1500 1640 1605 1510 1605Z" fill="#e5e5e5"/>
<g clip-path="url(#cc)"><path d="M700 760C900 760 1060 850 1100 950C1350 950 1450 1100 1460 1260C1600 1300 1660 1400 1660 1600H1800V700Z" fill="#d3d5d3"/></g>
<path d="M480 1605C330 1605 255 1490 255 1370C255 1250 330 1150 400 1130C400 880 600 715 820 715C920 715 1010 750 1075 820C1120 800 1160 795 1210 795C1390 795 1530 960 1545 1125C1650 1150 1735 1250 1735 1370C1735 1500 1640 1605 1510 1605Z" fill="none" stroke="#262626" stroke-width="45" stroke-linejoin="round"/>
<path d="M550 1130C550 980 660 870 800 870C870 870 930 890 980 935" stroke="#262626" stroke-width="42" fill="none" stroke-linecap="round"/>
</svg>
<div class="t " style="left:299.40px;top:1006.06px;font-size:18px;line-height:18px;color:#111;letter-spacing:0.455px;-webkit-text-stroke-width:0;">Cloudy</div>
<div class="t " style="left:208.70px;top:1046.77px;font-size:20px;line-height:20px;color:#111;letter-spacing:0.756px;-webkit-text-stroke-width:0;">Bundle up, it’s cold out!</div>
<div class="t " style="left:119.00px;top:1181.37px;font-size:33px;line-height:33px;color:#0a0a0a;letter-spacing:1.221px;">Temperature</div>
<div class="t " style="left:371.80px;top:1181.37px;font-size:33px;line-height:33px;color:#b5b5b5;letter-spacing:1.231px;">Lighting</div>
<div class="b" style="left:31px;top:1626px;width:188px;height:30px;background:#202020;border-radius:6px;"></div>
<div class="b" style="left:456px;top:1617px;width:63px;height:69px;background:#1f1f1f;border-radius:50%;"></div>
</div>
<div class="b" style="left:1572px;top:104px;width:462px;height:64px;background:#363636;"></div>
<svg class="b" style="left:1545.6px;top:129px;" width="13" height="10" viewBox="0 0 13 10"><path d="M0 0H13L6.5 10Z" fill="#8a8a8a"/></svg>
<svg class="b" style="left:1590px;top:125px;" width="29" height="25" viewBox="0 0 29 25"><path d="M1.5 1.5L15.5 16L26.5 4.5" stroke="#f0f0f0" stroke-width="3.2" fill="none"/><path d="M19.5 2.5H28V11Z" fill="#f0f0f0"/><rect x="0.3" y="21" width="27.6" height="3.4" fill="#9a9a9a"/></svg>
<div class="t " style="left:1631.00px;top:123.34px;font-size:27px;line-height:27px;color:#ebebeb;letter-spacing:-0.069px;">Tap</div>
<svg class="b" style="left:1988px;top:129px;" width="28" height="13" viewBox="0 0 28 13"><rect x="1" y="1" width="26" height="11" fill="#fff" stroke="#d0406a" stroke-width="1.6" stroke-dasharray="1.6 1.6"/></svg>
<div class="b" style="left:1572px;top:170px;width:462px;height:64px;background:#2a2a2a;"></div>
<div class="b" style="left:1572px;top:236px;width:462px;height:34px;background:#2a2a2a;"></div>
<svg class="b" style="left:1638px;top:245px;" width="16" height="16" viewBox="0 0 16 16"><path d="M8 0V16M0 8H16" stroke="#f0f0f0" stroke-width="2.6"/></svg>
<svg class="b" style="left:1600px;top:175px;" width="2" height="78" viewBox="0 0 2 78"><path d="M1 0V78" stroke="#858585" stroke-width="2" stroke-dasharray="5.5 4.5"/></svg>
<svg class="b" style="left:1601px;top:205px;" width="16" height="2" viewBox="0 0 16 2"><path d="M0 1H5.5M9.5 1H15.5" stroke="#858585" stroke-width="2"/></svg>
<svg class="b" style="left:1601px;top:246px;" width="16" height="7" viewBox="0 0 16 7"><path d="M1 0V6H5.5M9.5 6H15.5" stroke="#858585" stroke-width="2" fill="none"/></svg>
<div class="b" style="left:1549.6px;top:196.1px;width:8.800000000000182px;height:8.800000000000011px;background:#f0b354;border-radius:50%;"></div>
<svg class="b" style="left:1630.5px;top:186.5px;" width="31" height="31" viewBox="0 0 31 31"><path d="M15.5 0.5L20.7 7.6H10.3Z M15.5 30.5L20.7 23.4H10.3Z M0.5 15.5L7.6 10.3V20.7Z M30.5 15.5L23.4 10.3V20.7Z" fill="#f0b354"/><circle cx="15.5" cy="15.5" r="4.5" fill="#8f7344"/></svg>
<div class="t " style="left:1675.30px;top:188.84px;font-size:27px;line-height:27px;color:#f0b354;letter-spacing:-0.338px;">Move</div>
<div class="b" style="left:1988.7px;top:189px;width:26.0px;height:26px;background:#ffffff;border-radius:50%;"></div>
<div class="b" style="left:1572px;top:302px;width:462px;height:64px;background:#363636;"></div>
<svg class="b" style="left:1545.6px;top:327px;" width="13" height="10" viewBox="0 0 13 10"><path d="M0 0H13L6.5 10Z" fill="#8a8a8a"/></svg>
<svg class="b" style="left:1590px;top:323px;" width="29" height="25" viewBox="0 0 29 25"><path d="M1.5 1.5L15.5 16L26.5 4.5" stroke="#f0f0f0" stroke-width="3.2" fill="none"/><path d="M19.5 2.5H28V11Z" fill="#f0f0f0"/><rect x="0.3" y="21" width="27.6" height="3.4" fill="#9a9a9a"/></svg>
<div class="t " style="left:1631.00px;top:321.34px;font-size:27px;line-height:27px;color:#ebebeb;letter-spacing:-0.069px;">Tap</div>
<div class="b" style="left:1988.7px;top:321px;width:26.0px;height:26px;background:#e55c56;"></div>
<div class="b" style="left:1572px;top:368px;width:462px;height:64px;background:#2a2a2a;"></div>
<div class="b" style="left:1572px;top:434px;width:462px;height:64px;background:#2a2a2a;"></div>
<div class="b" style="left:1572px;top:500px;width:462px;height:34px;background:#2a2a2a;"></div>
<svg class="b" style="left:1638px;top:509px;" width="16" height="16" viewBox="0 0 16 16"><path d="M8 0V16M0 8H16" stroke="#f0f0f0" stroke-width="2.6"/></svg>
<svg class="b" style="left:1600px;top:373px;" width="2" height="144" viewBox="0 0 2 144"><path d="M1 0V144" stroke="#858585" stroke-width="2" stroke-dasharray="5.5 4.5"/></svg>
<svg class="b" style="left:1601px;top:403px;" width="16" height="2" viewBox="0 0 16 2"><path d="M0 1H5.5M9.5 1H15.5" stroke="#858585" stroke-width="2"/></svg>
<svg class="b" style="left:1601px;top:469px;" width="16" height="2" viewBox="0 0 16 2"><path d="M0 1H5.5M9.5 1H15.5" stroke="#858585" stroke-width="2"/></svg>
<svg class="b" style="left:1601px;top:510px;" width="16" height="7" viewBox="0 0 16 7"><path d="M1 0V6H5.5M9.5 6H15.5" stroke="#858585" stroke-width="2" fill="none"/></svg>
<div class="b" style="left:1549.6px;top:394.1px;width:8.800000000000182px;height:8.799999999999955px;background:#f0b354;border-radius:50%;"></div>
<svg class="b" style="left:1630px;top:384px;" width="31" height="30" viewBox="0 0 31 30"><path d="M1.5 28.5C6 28.5 7 25 8.5 17C10 9 11 2 17.5 1.5" stroke="#f0b354" stroke-width="2.8" fill="none"/><path d="M15 16L27.5 28.5M27.5 16L15 28.5" stroke="#f0b354" stroke-width="2.8"/></svg>
<div class="t " style="left:1675.30px;top:386.84px;font-size:27px;line-height:27px;color:#f0b354;letter-spacing:-0.413px;">Assign</div>
<svg class="b" style="left:1634.5px;top:455.0px;" width="22.5" height="22" viewBox="0 0 22.5 22"><path d="M1.5 6.5V1.5H21V6.5M11.25 1.5V20.5M6 20.5H16.5" stroke="#ececec" stroke-width="3.2" fill="none"/></svg>
<div class="t " style="left:1675.30px;top:452.84px;font-size:27px;line-height:27px;color:#ebebeb;letter-spacing:0.485px;">Text</div>
<svg class="b" style="left:1991.0px;top:455.3px;" width="22.5" height="22" viewBox="0 0 22.5 22"><path d="M1.5 6.5V1.5H21V6.5M11.25 1.5V20.5M6 20.5H16.5" stroke="#f0f0f0" stroke-width="3.2" fill="none"/></svg>
<div class="b" style="left:1572px;top:566px;width:462px;height:64px;background:#363636;"></div>
<svg class="b" style="left:1545.6px;top:591px;" width="13" height="10" viewBox="0 0 13 10"><path d="M0 0H13L6.5 10Z" fill="#8a8a8a"/></svg>
<svg class="b" style="left:1590px;top:587px;" width="29" height="25" viewBox="0 0 29 25"><path d="M1.5 1.5L15.5 16L26.5 4.5" stroke="#f0f0f0" stroke-width="3.2" fill="none"/><path d="M19.5 2.5H28V11Z" fill="#f0f0f0"/><rect x="0.3" y="21" width="27.6" height="3.4" fill="#9a9a9a"/></svg>
<div class="t " style="left:1631.00px;top:585.34px;font-size:27px;line-height:27px;color:#ebebeb;letter-spacing:-0.069px;">Tap</div>
<div class="b" style="left:1988.7px;top:585px;width:26.0px;height:26px;background:#3aa3c6;"></div>
<div class="b" style="left:1572px;top:632px;width:462px;height:64px;background:#2a2a2a;"></div>
<div class="b" style="left:1572px;top:698px;width:462px;height:64px;background:#2a2a2a;"></div>
<div class="b" style="left:1572px;top:764px;width:462px;height:34px;background:#2a2a2a;"></div>
<svg class="b" style="left:1638px;top:773px;" width="16" height="16" viewBox="0 0 16 16"><path d="M8 0V16M0 8H16" stroke="#f0f0f0" stroke-width="2.6"/></svg>
<svg class="b" style="left:1600px;top:637px;" width="2" height="144" viewBox="0 0 2 144"><path d="M1 0V144" stroke="#858585" stroke-width="2" stroke-dasharray="5.5 4.5"/></svg>
<svg class="b" style="left:1601px;top:667px;" width="16" height="2" viewBox="0 0 16 2"><path d="M0 1H5.5M9.5 1H15.5" stroke="#858585" stroke-width="2"/></svg>
<svg class="b" style="left:1601px;top:733px;" width="16" height="2" viewBox="0 0 16 2"><path d="M0 1H5.5M9.5 1H15.5" stroke="#858585" stroke-width="2"/></svg>
<svg class="b" style="left:1601px;top:774px;" width="16" height="7" viewBox="0 0 16 7"><path d="M1 0V6H5.5M9.5 6H15.5" stroke="#858585" stroke-width="2" fill="none"/></svg>
<div class="b" style="left:1549.6px;top:658.1px;width:8.800000000000182px;height:8.799999999999955px;background:#f0b354;border-radius:50%;"></div>
<svg class="b" style="left:1630px;top:648px;" width="31" height="30" viewBox="0 0 31 30"><path d="M1.5 28.5C6 28.5 7 25 8.5 17C10 9 11 2 17.5 1.5" stroke="#f0b354" stroke-width="2.8" fill="none"/><path d="M15 16L27.5 28.5M27.5 16L15 28.5" stroke="#f0b354" stroke-width="2.8"/></svg>
<div class="t " style="left:1675.30px;top:650.84px;font-size:27px;line-height:27px;color:#f0b354;letter-spacing:-0.413px;">Assign</div>
<svg class="b" style="left:1634.5px;top:719.0px;" width="22.5" height="22" viewBox="0 0 22.5 22"><path d="M1.5 6.5V1.5H21V6.5M11.25 1.5V20.5M6 20.5H16.5" stroke="#ececec" stroke-width="3.2" fill="none"/></svg>
<div class="t " style="left:1675.30px;top:716.84px;font-size:27px;line-height:27px;color:#ebebeb;letter-spacing:0.485px;">Text</div>
<svg class="b" style="left:1991.0px;top:719.3px;" width="22.5" height="22" viewBox="0 0 22.5 22"><path d="M1.5 6.5V1.5H21V6.5M11.25 1.5V20.5M6 20.5H16.5" stroke="#f0f0f0" stroke-width="3.2" fill="none"/></svg>
<div class="b" style="left:1572px;top:830px;width:462px;height:64px;background:#363636;"></div>
<svg class="b" style="left:1545.6px;top:855px;" width="13" height="10" viewBox="0 0 13 10"><path d="M0 0H13L6.5 10Z" fill="#8a8a8a"/></svg>
<svg class="b" style="left:1588.5px;top:847px;" width="32" height="31" viewBox="0 0 32 31"><path d="M15.5 0V8.5M15.5 22.5V31M0 15.5H8.5M22.5 15.5H31" stroke="#ececec" stroke-width="3"/></svg>
<div class="t " style="left:1631.00px;top:849.24px;font-size:27px;line-height:27px;color:#ebebeb;letter-spacing:0.394px;">Detect</div>
<svg class="b" style="left:1990.5px;top:851px;" width="23" height="22" viewBox="0 0 23 22"><rect x="1" y="1" width="21" height="20" fill="none" stroke="#8a8a8a" stroke-width="2"/><path d="M7 6.5L16 15.5M16 6.5L7 15.5" stroke="#ececec" stroke-width="2.4"/></svg>
<div class="b" style="left:1572px;top:896px;width:462px;height:42px;background:#363636;"></div>
<svg class="b" style="left:1596px;top:906px;" width="24" height="20" viewBox="0 0 24 20"><path d="M8 10.1H11C13 10.1 15 12 18 14.8" stroke="#9a9a9a" stroke-width="2.2" fill="none"/><path d="M13.5 7L17 4.8" stroke="#9a9a9a" stroke-width="2.2"/><path d="M4.5 6.4L8.2 10.1L4.5 13.8L0.8 10.1Z" fill="#ebebeb"/><circle cx="20.3" cy="3.6" r="3.2" fill="#ebebeb"/><circle cx="20.3" cy="16.4" r="3.3" fill="#ebebeb"/></svg>
<div class="t " style="left:1632.50px;top:906.23px;font-size:23px;line-height:23px;color:#ebebeb;letter-spacing:0.203px;">Condition</div>
<div class="b" style="left:1572px;top:940px;width:462px;height:64px;background:#2a2a2a;"></div>
<svg class="b" style="left:1600px;top:945px;" width="2" height="57" viewBox="0 0 2 57"><path d="M1 0V57" stroke="#858585" stroke-width="2" stroke-dasharray="5.5 4.5"/></svg>
<svg class="b" style="left:1601px;top:975px;" width="16" height="2" viewBox="0 0 16 2"><path d="M0 1H5.5M9.5 1H15.5" stroke="#858585" stroke-width="2"/></svg>
<svg class="b" style="left:1630.5px;top:957px;" width="31" height="29" viewBox="0 0 31 29"><circle cx="14.9" cy="8.2" r="8.2" fill="#9a9a9a"/><circle cx="8.2" cy="21" r="8.6" fill="#7a7a7a" stroke="#2a2a2a" stroke-width="2"/><circle cx="22" cy="20" r="9.3" fill="#eeeeee" stroke="#2a2a2a" stroke-width="2.4"/></svg>
<div class="t " style="left:1674.30px;top:958.84px;font-size:27px;line-height:27px;color:#ebebeb;letter-spacing:0.192px;">Color</div>
<div class="b" style="left:1990px;top:967.5px;width:24.200000000000045px;height:9.5px;background:#ffffff;border-radius:3px;"></div>
<div class="b" style="left:1572px;top:1006px;width:462px;height:42px;background:#363636;"></div>
<svg class="b" style="left:1596px;top:1016px;" width="24" height="20" viewBox="0 0 24 20"><path d="M8 10.1H11C13 10.1 15 12 18 14.8" stroke="#9a9a9a" stroke-width="2.2" fill="none"/><path d="M13.5 7L17 4.8" stroke="#9a9a9a" stroke-width="2.2"/><path d="M4.5 6.4L8.2 10.1L4.5 13.8L0.8 10.1Z" fill="#ebebeb"/><circle cx="20.3" cy="3.6" r="3.2" fill="#ebebeb"/><circle cx="20.3" cy="16.4" r="3.3" fill="#ebebeb"/></svg>
<div class="t " style="left:1632.50px;top:1016.23px;font-size:23px;line-height:23px;color:#ebebeb;letter-spacing:0.203px;">Condition</div>
<div class="b" style="left:1572px;top:1050px;width:462px;height:64px;background:#2a2a2a;"></div>
<svg class="b" style="left:1600px;top:1055px;" width="2" height="57" viewBox="0 0 2 57"><path d="M1 0V57" stroke="#858585" stroke-width="2" stroke-dasharray="5.5 4.5"/></svg>
<svg class="b" style="left:1601px;top:1085px;" width="16" height="2" viewBox="0 0 16 2"><path d="M0 1H5.5M9.5 1H15.5" stroke="#858585" stroke-width="2"/></svg>
<svg class="b" style="left:1630.5px;top:1067px;" width="31" height="29" viewBox="0 0 31 29"><circle cx="14.9" cy="8.2" r="8.2" fill="#9a9a9a"/><circle cx="8.2" cy="21" r="8.6" fill="#7a7a7a" stroke="#2a2a2a" stroke-width="2"/><circle cx="22" cy="20" r="9.3" fill="#eeeeee" stroke="#2a2a2a" stroke-width="2.4"/></svg>
<div class="t " style="left:1674.30px;top:1068.84px;font-size:27px;line-height:27px;color:#ebebeb;letter-spacing:0.192px;">Color</div>
<div class="b" style="left:1990px;top:1077.5px;width:24.200000000000045px;height:9.5px;background:#ffffff;border-radius:3px;"></div>
<div class="b" style="left:1572px;top:1116px;width:462px;height:42px;background:#363636;"></div>
<svg class="b" style="left:1596px;top:1126px;" width="24" height="20" viewBox="0 0 24 20"><path d="M8 10.1H11C13 10.1 15 12 18 14.8" stroke="#9a9a9a" stroke-width="2.2" fill="none"/><path d="M13.5 7L17 4.8" stroke="#9a9a9a" stroke-width="2.2"/><path d="M4.5 6.4L8.2 10.1L4.5 13.8L0.8 10.1Z" fill="#ebebeb"/><circle cx="20.3" cy="3.6" r="3.2" fill="#ebebeb"/><circle cx="20.3" cy="16.4" r="3.3" fill="#ebebeb"/></svg>
<div class="t " style="left:1632.50px;top:1126.23px;font-size:23px;line-height:23px;color:#ebebeb;letter-spacing:0.203px;">Condition</div>
<div class="b" style="left:1572px;top:1160px;width:462px;height:64px;background:#2a2a2a;"></div>
<svg class="b" style="left:1600px;top:1165px;" width="2" height="57" viewBox="0 0 2 57"><path d="M1 0V57" stroke="#858585" stroke-width="2" stroke-dasharray="5.5 4.5"/></svg>
<svg class="b" style="left:1601px;top:1195px;" width="16" height="2" viewBox="0 0 16 2"><path d="M0 1H5.5M9.5 1H15.5" stroke="#858585" stroke-width="2"/></svg>
<svg class="b" style="left:1630.5px;top:1177px;" width="31" height="29" viewBox="0 0 31 29"><circle cx="14.9" cy="8.2" r="8.2" fill="#9a9a9a"/><circle cx="8.2" cy="21" r="8.6" fill="#7a7a7a" stroke="#2a2a2a" stroke-width="2"/><circle cx="22" cy="20" r="9.3" fill="#eeeeee" stroke="#2a2a2a" stroke-width="2.4"/></svg>
<div class="t " style="left:1674.30px;top:1178.84px;font-size:27px;line-height:27px;color:#ebebeb;letter-spacing:0.192px;">Color</div>
<div class="b" style="left:1993px;top:1195px;width:15px;height:2px;background:#3a3a3a;"></div>
<div class="b" style="left:1572px;top:1226px;width:462px;height:42px;background:#363636;"></div>
<svg class="b" style="left:1596px;top:1236px;" width="24" height="20" viewBox="0 0 24 20"><path d="M8 10.1H11C13 10.1 15 12 18 14.8" stroke="#b8894a" stroke-width="2.2" fill="none"/><path d="M13.5 7L17 4.8" stroke="#b8894a" stroke-width="2.2"/><path d="M4.5 6.4L8.2 10.1L4.5 13.8L0.8 10.1Z" fill="#f0b354"/><circle cx="20.3" cy="3.6" r="3.2" fill="#f0b354"/><circle cx="20.3" cy="16.4" r="3.3" fill="#f0b354"/></svg>
<div class="t " style="left:1632.50px;top:1236.23px;font-size:23px;line-height:23px;color:#f0b354;letter-spacing:0.203px;">Condition</div>
<div class="b" style="left:1572px;top:1270px;width:462px;height:64px;background:#2a2a2a;"></div>
<svg class="b" style="left:1600px;top:1275px;" width="2" height="75" viewBox="0 0 2 75"><path d="M1 0V75" stroke="#858585" stroke-width="2" stroke-dasharray="5.5 4.5"/></svg>
<svg class="b" style="left:1601px;top:1305px;" width="16" height="2" viewBox="0 0 16 2"><path d="M0 1H5.5M9.5 1H15.5" stroke="#858585" stroke-width="2"/></svg>
<svg class="b" style="left:1630.5px;top:1287px;" width="31" height="29" viewBox="0 0 31 29"><circle cx="14.9" cy="8.2" r="8.2" fill="#9a9a9a"/><circle cx="8.2" cy="21" r="8.6" fill="#7a7a7a" stroke="#2a2a2a" stroke-width="2"/><circle cx="22" cy="20" r="9.3" fill="#eeeeee" stroke="#2a2a2a" stroke-width="2.4"/></svg>
<div class="t " style="left:1674.30px;top:1288.84px;font-size:27px;line-height:27px;color:#ebebeb;letter-spacing:0.192px;">Color</div>
<div class="b" style="left:1993px;top:1305px;width:15px;height:2px;background:#3a3a3a;"></div>
<div class="b" style="left:1549.6px;top:1243.1999999999998px;width:8.800000000000182px;height:8.800000000000182px;background:#f0b354;border-radius:50%;"></div>
<div class="b" style="left:1572px;top:1336px;width:462px;height:34px;background:#2a2a2a;"></div>
<svg class="b" style="left:1638px;top:1345px;" width="16" height="16" viewBox="0 0 16 16"><path d="M8 0V16M0 8H16" stroke="#f0f0f0" stroke-width="2.6"/></svg>
<svg class="b" style="left:1601px;top:1346px;" width="16" height="7" viewBox="0 0 16 7"><path d="M1 0V6H5.5M9.5 6H15.5" stroke="#858585" stroke-width="2" fill="none"/></svg>
<div class="b" style="left:1572px;top:1402px;width:462px;height:64px;background:#363636;"></div>
<svg class="b" style="left:1545.6px;top:1427px;" width="13" height="10" viewBox="0 0 13 10"><path d="M0 0H13L6.5 10Z" fill="#8a8a8a"/></svg>
<svg class="b" style="left:1590px;top:1423px;" width="29" height="25" viewBox="0 0 29 25"><path d="M1.5 1.5L15.5 16L26.5 4.5" stroke="#f0f0f0" stroke-width="3.2" fill="none"/><path d="M19.5 2.5H28V11Z" fill="#f0f0f0"/><rect x="0.3" y="21" width="27.6" height="3.4" fill="#9a9a9a"/></svg>
<div class="t " style="left:1631.00px;top:1421.34px;font-size:27px;line-height:27px;color:#ebebeb;letter-spacing:-0.069px;">Tap</div>
<div class="b" style="left:1994px;top:1432px;width:16px;height:3px;background:#555;"></div>
<div class="b" style="left:1572px;top:1468px;width:462px;height:64px;background:#2a2a2a;"></div>
<div class="b" style="left:1572px;top:1534px;width:462px;height:34px;background:#2a2a2a;"></div>
<svg class="b" style="left:1638px;top:1543px;" width="16" height="16" viewBox="0 0 16 16"><path d="M8 0V16M0 8H16" stroke="#f0f0f0" stroke-width="2.6"/></svg>
<svg class="b" style="left:1600px;top:1473px;" width="2" height="78" viewBox="0 0 2 78"><path d="M1 0V78" stroke="#858585" stroke-width="2" stroke-dasharray="5.5 4.5"/></svg>
<svg class="b" style="left:1601px;top:1503px;" width="16" height="2" viewBox="0 0 16 2"><path d="M0 1H5.5M9.5 1H15.5" stroke="#858585" stroke-width="2"/></svg>
<svg class="b" style="left:1601px;top:1544px;" width="16" height="7" viewBox="0 0 16 7"><path d="M1 0V6H5.5M9.5 6H15.5" stroke="#858585" stroke-width="2" fill="none"/></svg>
<svg class="b" style="left:1629.5px;top:1482.5px;" width="33" height="30" viewBox="0 0 33 30"><circle cx="6.5" cy="23" r="4.8" stroke="#909090" stroke-width="3.4" fill="none"/><path d="M11 21H17V8H27" stroke="#ececec" stroke-width="3" fill="none"/><path d="M25 2L32 8L25 14Z" fill="#ececec"/></svg>
<div class="t " style="left:1674.70px;top:1486.84px;font-size:27px;line-height:27px;color:#ebebeb;letter-spacing:0.095px;">Jump</div>
<div class="b" style="left:1992px;top:1484px;width:20px;height:32px;background:#4a4a4a;"></div>
<div class="b" style="left:1995px;top:1486px;width:15px;height:28px;background:#ffffff;"></div>
<div class="b" style="left:1998px;top:1503px;width:4px;height:4px;background:#f3d55a;"></div>
<div class="b" style="left:2003px;top:1503px;width:4px;height:4px;background:#4f9a4c;"></div>
<div class="b" style="left:1998px;top:1508px;width:4px;height:4px;background:#3f72e5;"></div>
<div class="b" style="left:2003px;top:1508px;width:4px;height:4px;background:#e84545;"></div>
<div class="b" style="left:1572px;top:1600px;width:462px;height:60px;background:#363636;"></div>
<div class="t " style="left:1731.00px;top:1615.64px;font-size:27px;line-height:27px;color:#ebebeb;letter-spacing:0.441px;">Add Trigger</div>
<div class="t " style="left:2048.00px;top:124.69px;font-size:26px;line-height:26px;color:#9a9a9a;">c</div>
<div class="t " style="left:2048.00px;top:322.69px;font-size:26px;line-height:26px;color:#9a9a9a;">c</div>
<div class="t " style="left:2048.00px;top:586.69px;font-size:26px;line-height:26px;color:#9a9a9a;">c</div>
<div class="t " style="left:2048.00px;top:850.69px;font-size:26px;line-height:26px;color:#9a9a9a;">c</div>
<div class="b" style="left:2045px;top:394px;width:18px;height:18px;background:#555;border-radius:50%;"></div>
<div class="b" style="left:2045px;top:460px;width:18px;height:18px;background:#555;border-radius:50%;"></div>
<div class="b" style="left:2045px;top:658px;width:18px;height:18px;background:#555;border-radius:50%;"></div>
<div class="b" style="left:2045px;top:724px;width:18px;height:18px;background:#555;border-radius:50%;"></div>
</body></html>
